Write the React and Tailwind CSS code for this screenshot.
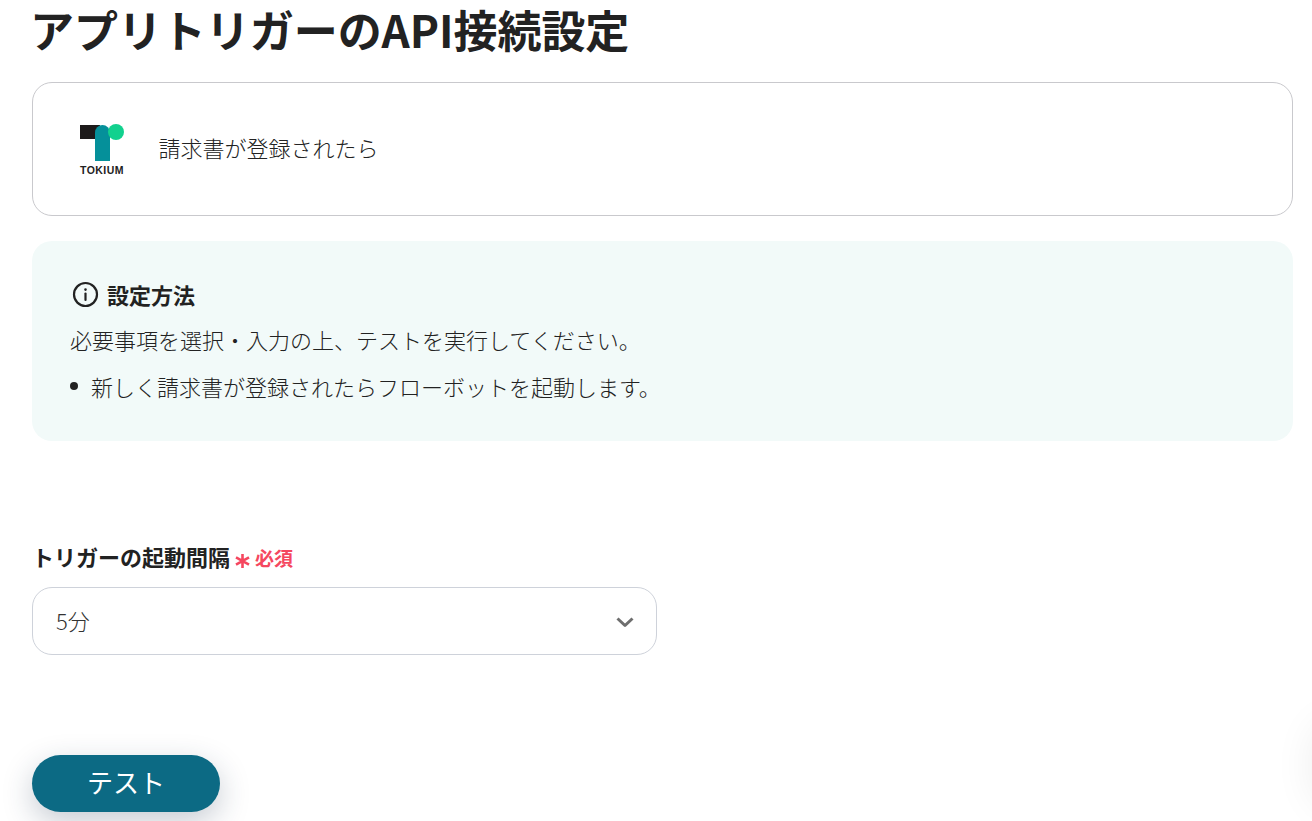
import React from "react";

function Logo() {
  return (
    <div className="flex w-[44px] flex-col items-center">
      <svg width="44" height="38" viewBox="0 0 44 38" className="block">
        <rect x="0" y="2" width="20" height="14" fill="#1d1a1a" />
        <path d="M15 38V9.500a7.500 7.500 0 0 1 15 0V38z" fill="#05909a" />
        <circle cx="36" cy="9" r="8" fill="#12d18e" />
      </svg>
      <span className="mt-[4px] text-[10.5px] leading-[10px] font-bold tracking-[0.45px] text-[#222] font-['Liberation_Sans',sans-serif]">TOKIUM</span>
    </div>
  );
}

export default function App() {
  return (
    <div className="relative h-[821px] w-[1312px] overflow-hidden bg-white pl-[32px] pr-[19px] font-['Noto_Sans_CJK_JP','Noto_Sans',sans-serif] text-[#222]">
      <h1 className="-ml-[2px] h-[82px] text-[44px] leading-[58px] font-bold tracking-[-0.05px] text-[#222]">アプリトリガーのAPI接続設定</h1>

      <div className="flex h-[134px] items-center gap-[35px] rounded-[20px] border border-[#c9c9cd] pl-[47px]">
        <Logo />
        <span className="-ml-[0.5px] -mt-[4px] text-[22px] leading-[32px] font-light text-[#222]">請求書が登録されたら</span>
      </div>

      <div className="mt-[25px] h-[200px] rounded-[20px] bg-[#f2faf9] pl-[38px] pt-[38px]">
        <div className="flex items-center gap-[8px] pl-[2px]">
          <svg width="27" height="27" viewBox="0 0 27 27" fill="none" stroke="#222" strokeWidth="2.2">
            <circle cx="13.5" cy="13.5" r="11.5" />
            <path d="M13.5 12.500v6.500" strokeLinecap="round" />
            <circle cx="13.5" cy="8.600" r="0.600" fill="#222" strokeWidth="1.4" />
          </svg>
          <span className="-mt-[1px] text-[22px] leading-[32px] font-bold">設定方法</span>
        </div>
        <p className="mt-[13px] text-[22px] leading-[32px] font-light text-[#222]">必要事項を選択・入力の上、テストを実行してください。</p>
        <ul className="mt-[15px]">
          <li className="flex items-center text-[22px] leading-[32px] font-light text-[#222]">
            <span className="mr-[13px] h-[8px] w-[8px] rounded-full bg-[#222]" />
            新しく請求書が登録されたらフローボットを起動します。
          </li>
        </ul>
      </div>

      <div className="mt-[101px] flex h-[32px] items-center">
        <span className="-mt-[5px] text-[22px] leading-[32px] font-bold">トリガーの起動間隔</span>
        <span className="ml-[5px] flex items-center font-bold text-[#f5475f]">
          <svg width="15" height="16" viewBox="0 0 15 16" className="mt-[5px]" stroke="#f5475f" strokeWidth="2.6">
            <path d="M7.500 1v14M1 4.300l13 7.400M14 4.300L1 11.700" />
          </svg>
          <span className="ml-[5px] text-[19px] leading-[32px]">必須</span>
        </span>
      </div>

      <div className="mt-[13px] flex h-[68px] w-[625px] items-center justify-between rounded-[20px] border border-[#ced2da] pl-[23px] pr-[21px]">
        <span className="-mt-[2px] text-[22px] leading-[32px] font-light text-[#333]">5分</span>
        <svg width="20" height="12" viewBox="0 0 20 12" fill="none" stroke="#6e6e6e" strokeWidth="3" strokeLinejoin="round" className="mt-[2px]">
          <path d="M2.500 2.500L10 9.500L17.500 2.500" />
        </svg>
      </div>

      <button className="mt-[100px] flex h-[57px] w-[188px] items-center justify-center rounded-full bg-[#0c6a84] pb-[4px] text-[26px] leading-none font-normal text-white shadow-[0_10px_30px_rgba(30,50,80,0.25)]">
        テスト
      </button>

      <div className="absolute -right-[60px] top-[720px] h-[90px] w-[60px] rounded-full shadow-[0_0_40px_rgba(0,0,0,0.07)]" />
    </div>
  );
}
